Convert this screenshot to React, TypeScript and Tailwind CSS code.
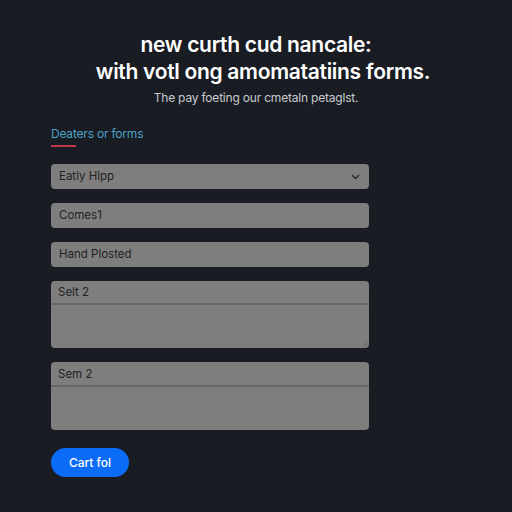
import React from "react";

export default function App() {
  return (
    <div className="w-[512px] h-[512px] bg-[#191c23] overflow-hidden" style={{ fontFamily: "Inter, 'Noto Sans', sans-serif" }}>
      <div className="pt-[31px] flex flex-col items-center">
        <h1 className="text-[21px] leading-[27px] font-semibold text-white text-center tracking-[-0.3px]">
          new curth cud nancale:
          <br />
          <span className="pl-[14px]">with votl ong amomatatiins forms.</span>
        </h1>
        <p className="mt-[5px] text-[12px] leading-[16px] text-[#c9cbd0] tracking-[-0.2px]">The pay foeting our cmetaln petaglst.</p>
      </div>
      <div className="px-[51px] w-[420px]">
        <div className="mt-[20px] text-[12px] leading-[16px] text-[#4ba2c6] tracking-[-0.2px]">Deaters or forms</div>
        <div className="mt-[3px] w-[25px] h-[2px] bg-[#c0394a]" />
        <div className="mt-[17px] flex flex-col gap-[14px] w-[318px]">
          <div className="h-[25px] rounded-[4px] bg-[#7e7e7e] flex items-center justify-between px-[8px]">
            <span className="text-[11.5px] text-[#222222]">Eatly Hlpp</span>
            <svg width="9" height="6" viewBox="0 0 9 6" className="mr-[1px]"><path d="M1 1l3.5 3.5L8 1" stroke="#2a2a2a" strokeWidth="1.4" fill="none" /></svg>
          </div>
          <div className="h-[25px] rounded-[4px] bg-[#7e7e7e] flex items-center px-[8px]">
            <span className="text-[11.5px] text-[#222222]">Comes1</span>
          </div>
          <div className="h-[25px] rounded-[4px] bg-[#7e7e7e] flex items-center px-[8px]">
            <span className="text-[11.5px] text-[#222222]">Hand Plosted</span>
          </div>
          <div className="h-[67px] rounded-[4px] bg-[#7e7e7e] flex flex-col relative">
            <div className="h-[24px] flex items-center pt-[2px] px-[7px] border-b-2 border-[#666666]">
              <span className="text-[11.5px] text-[#222222]">Selt 2</span>
            </div>
            <svg width="6" height="6" viewBox="0 0 6 6" className="absolute right-[1px] bottom-[1px]"><path d="M5 1L1 5M5 3.5L3.5 5" stroke="#555" strokeWidth="0.8" /></svg>
          </div>
          <div className="h-[68px] rounded-[4px] bg-[#7e7e7e] flex flex-col">
            <div className="h-[25px] flex items-center pt-[2px] px-[7px] border-b-2 border-[#666666]">
              <span className="text-[11.5px] text-[#222222]">Sem 2</span>
            </div>
          </div>
        </div>
        <button className="mt-[18px] w-[78px] h-[29px] rounded-full bg-[#0b6cf8] text-white text-[12px] font-medium">Cart fol</button>
      </div>
    </div>
  );
}
